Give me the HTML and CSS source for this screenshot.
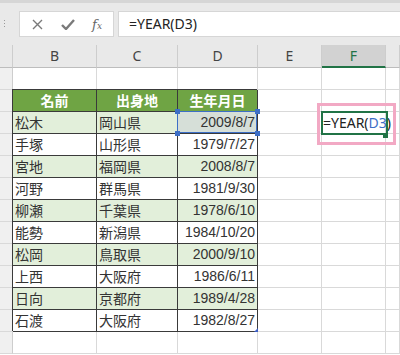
FILE: index.html
```html
<!DOCTYPE html>
<html lang="ja">
<head>
  <meta charset="UTF-8" />
  <title>YEAR関数</title>
  <link rel="stylesheet" href="styles.css">
</head>
<body>
  <div class="toolbar">
    <div class="grip"><i></i><i></i><i></i></div>
    <div class="fbtns">
      <svg width="11" height="11" viewBox="0 0 11 11"><path d="M1 1 L10 10 M10 1 L1 10" stroke="#7a7a7a" stroke-width="1.4" fill="none"/></svg>
      <svg width="14" height="11" viewBox="0 0 14 11"><path d="M1 6 L5 10 L13 1" stroke="#7a7a7a" stroke-width="2.4" fill="none"/></svg>
      <span class="fx">f<small>x</small></span>
    </div>
    <div class="fbox">=YEAR(D3)</div>
  </div>

  <div class="sheet">
    <!-- column headers -->
    <div class="ch"></div><div class="ch">B</div><div class="ch">C</div><div class="ch">D</div><div class="ch">E</div><div class="ch cur">F</div><div class="ch"></div>
    <!-- row 1 -->
    <div class="rh"></div><div class="top"></div><div class="top"></div><div class="top"></div><div></div><div></div><div></div>
    <!-- row 2 -->
    <div class="rh edge"></div><div class="t th">名前</div><div class="t th">出身地</div><div class="t th">生年月日</div><div></div><div></div><div></div>
    <!-- rows 3-12 -->
    <div class="rh edge"></div><div class="t band">松木</div><div class="t band">岡山県</div><div class="t band num sel">2009/8/7</div><div></div>
    <div class="edit"><span class="mark"></span>=YEAR(<span class="ref">D3</span>)<span class="caret"></span></div><div></div>
    <div class="rh edge"></div><div class="t">手塚</div><div class="t">山形県</div><div class="t num">1979/7/27</div><div></div><div></div><div></div>
    <div class="rh edge"></div><div class="t band">宮地</div><div class="t band">福岡県</div><div class="t band num">2008/8/7</div><div></div><div></div><div></div>
    <div class="rh edge"></div><div class="t">河野</div><div class="t">群馬県</div><div class="t num">1981/9/30</div><div></div><div></div><div></div>
    <div class="rh edge"></div><div class="t band">柳瀬</div><div class="t band">千葉県</div><div class="t band num">1978/6/10</div><div></div><div></div><div></div>
    <div class="rh edge"></div><div class="t">能勢</div><div class="t">新潟県</div><div class="t num">1984/10/20</div><div></div><div></div><div></div>
    <div class="rh edge"></div><div class="t band">松岡</div><div class="t band">鳥取県</div><div class="t band num">2000/9/10</div><div></div><div></div><div></div>
    <div class="rh edge"></div><div class="t">上西</div><div class="t">大阪府</div><div class="t num">1986/6/11</div><div></div><div></div><div></div>
    <div class="rh edge"></div><div class="t band">日向</div><div class="t band">京都府</div><div class="t band num">1989/4/28</div><div></div><div></div><div></div>
    <div class="rh edge"></div><div class="t">石渡</div><div class="t">大阪府</div><div class="t num last">1982/8/27</div><div></div><div></div><div></div>
    <!-- row 13 -->
    <div class="rh"></div><div></div><div></div><div></div><div></div><div></div><div></div>
  </div>
</body>
</html>
```

FILE: styles.css
```css
body {
  margin: 0;
  width: 400px;
  height: 355px;
  overflow: hidden;
  background: #fff;
  font-family: "Noto Sans", "Noto Sans CJK JP", sans-serif;
  color: #333;
}

/* formula bar */
.toolbar {
  height: 45px;
  box-sizing: border-box;
  background: #e9e9e9;
  border-top: 3px solid #d6d6d6;
  display: flex;
  align-items: flex-start;
  padding-top: 8px;
}
.grip {
  width: 19px;
  box-sizing: border-box;
  display: flex;
  flex-direction: column;
  align-items: flex-start;
  gap: 2px;
  padding: 9px 0 0 4px;
}
.grip i {
  width: 1px;
  height: 1px;
  background: #999;
}
.fbtns {
  width: 95px;
  height: 26px;
  box-sizing: border-box;
  background: #fff;
  border: 1px solid #d6d6d6;
  display: flex;
  align-items: center;
  justify-content: space-between;
  padding: 0 11px 0 12px;
}
.fx {
  font-family: "DejaVu Serif", serif;
  font-style: italic;
  font-size: 13px;
  color: #666;
}
.fx small {
  font-size: 9px;
}
.fbox {
  flex: 1;
  margin-left: 4px;
  height: 26px;
  box-sizing: border-box;
  background: #fff;
  border: 1px solid #d6d6d6;
  border-right: none;
  padding-left: 10px;
  font-size: 14px;
  line-height: 24px;
  color: #222;
}

/* sheet grid */
.sheet {
  display: grid;
  grid-template-columns: 13px 84px 81px 80px 64px 64px 1fr;
  grid-template-rows: 23px;
  grid-auto-rows: 22px;
}
.sheet > div {
  box-sizing: border-box;
  border-right: 1px solid #d9d9d9;
  border-bottom: 1px solid #d9d9d9;
  font-size: 14px;
  line-height: 21px;
  padding: 0 2px;
  white-space: nowrap;
}
.sheet > .ch {
  background: #e9e9e9;
  border-right-color: #cdcdcd;
  border-bottom-color: #bdbdbd;
  text-align: center;
  line-height: 22px;
  color: #444;
}
.sheet > .ch.cur {
  background: #d2d2d2;
  border-bottom: 2px solid #217346;
  color: #217346;
}
.sheet > .rh {
  background: #f0f0f0;
  border-right-color: #cdcdcd;
  padding: 0;
}

/* data table */
.sheet > .t {
  border-right-color: #3a3a3a;
  border-bottom-color: #3a3a3a;
  box-shadow: -1px -1px 0 #3a3a3a;
}
.sheet > .th {
  background: #6fa444;
  color: #fff;
  font-weight: bold;
  text-align: center;
}
.sheet > .band {
  background: #e2efda;
}
.sheet > .num {
  text-align: right;
  font-family: "Liberation Sans", sans-serif;
}
.sheet > .sel {
  position: relative;
  background: #d6dfd8;
}
.sel::before {
  content: "";
  position: absolute;
  left: -1px;
  top: -1px;
  right: 0;
  bottom: 0;
  border: 1px solid #3d6fc6;
}
.sel::after {
  content: "";
  position: absolute;
  left: -3px;
  top: -3px;
  width: 5px;
  height: 5px;
  background: #3d6fc6;
  box-shadow: 80px 0 #3d6fc6, 0 22px #3d6fc6, 80px 22px #3d6fc6;
}
.last {
  position: relative;
}
.last::after {
  content: "";
  position: absolute;
  right: -1px;
  bottom: -1px;
  border-left: 4px solid transparent;
  border-bottom: 4px solid #3d5fc6;
}

/* cell being edited */
.sheet > .edit {
  position: relative;
  z-index: 2;
  padding-left: 1px;
  color: #222;
}
.edit::before {
  content: "";
  position: absolute;
  left: -1px;
  top: -1px;
  right: -3px;
  bottom: -2px;
  border: 2px solid #217346;
}
.edit::after {
  content: "";
  position: absolute;
  right: -3px;
  bottom: -5px;
  width: 5px;
  height: 3px;
  background: #217346;
}
.ref {
  color: #3d6fc6;
}
.caret {
  display: inline-block;
  width: 1px;
  height: 16px;
  margin-left: 2px;
  vertical-align: -3px;
  background: #222;
}
.mark {
  position: absolute;
  left: -5px;
  top: -9px;
  width: 79px;
  height: 42px;
  box-sizing: border-box;
  border: 3px solid #f2a9c4;
}
```
